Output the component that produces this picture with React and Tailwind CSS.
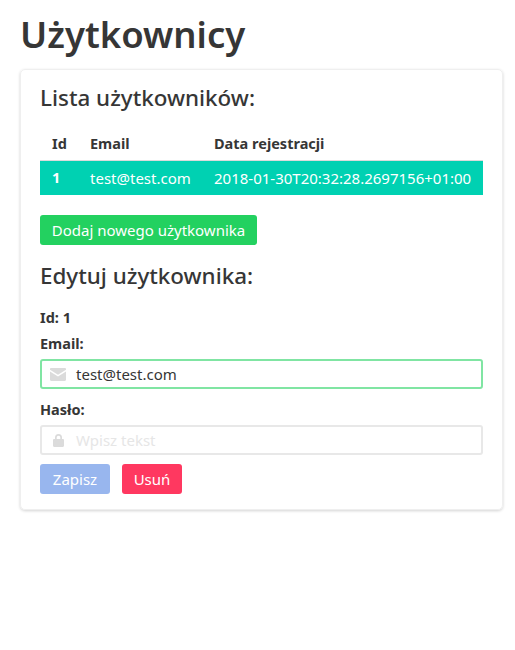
import React from 'react';

const MailIcon = () => (
  <svg className="w-4 h-[13px] text-[#dbdbdb]" viewBox="0 0 16 13" fill="currentColor">
    <path d="M0 1.2C0 .5.5 0 1.2 0h13.6C15.5 0 16 .5 16 1.2v.5L8 6.800 0 1.700v-.5z" />
    <path d="M0 3.400v8.400c0 .7.5 1.200 1.200 1.200h13.600c.7 0 1.200-.5 1.200-1.200V3.400L8 8.500 0 3.400z" />
  </svg>
);

const LockIcon = () => (
  <svg className="w-[11px] h-[13px] text-[#dbdbdb]" viewBox="0 0 11 13" fill="currentColor">
    <path d="M2 5V3.500a3.500 3.500 0 017 0V5h.8c.7 0 1.200.5 1.200 1.200v5.600c0 .7-.5 1.200-1.200 1.200H1.200C.5 13 0 12.500 0 11.800V6.200C0 5.500.5 5 1.200 5H2zm1.700 0h3.600V3.500a1.800 1.800 0 00-3.600 0V5z" />
  </svg>
);

const App = () => {
  return (
    <div className="min-h-[650px] bg-white px-5 pt-[11px] text-[#363636] font-['Noto_Sans','Open_Sans',sans-serif] text-[15px]">
      <h1 className="text-[36.5px] leading-[46px] font-semibold mb-[12px]">Użytkownicy</h1>

      <div className="w-[483px] rounded-[5px] border border-[#efefef] shadow-[0_1px_3px_rgba(10,10,10,0.18)] px-[19px] pt-[14px] pb-[15px]">
        <h2 className="text-[22.4px] leading-[28px] font-medium text-[#363636] mb-[17px]">Lista użytkowników:</h2>

        <table className="w-full border-collapse">
          <thead>
            <tr className="text-left">
              <th className="w-[38px] pl-3 h-[31px] font-bold text-[14.5px]">Id</th>
              <th className="w-[124px] h-[31px] pl-3 font-bold text-[14.5px]">Email</th>
              <th className="pl-3 h-[31px] font-bold text-[14.5px]">Data rejestracji</th>
            </tr>
          </thead>
          <tbody>
            <tr className="bg-[#00d1b2] text-white border-t border-[#dbdbdb]">
              <td className="pl-3 h-[35px] font-bold text-[14.5px]">1</td>
              <td className="pl-3 h-[35px] text-[15px]">test@test.com</td>
              <td className="pl-3 h-[35px] text-[15px] whitespace-nowrap">2018-01-30T20:32:28.2697156+01:00</td>
            </tr>
          </tbody>
        </table>

        <button className="block mt-5 h-[30px] w-[217px] rounded-[3px] bg-[#23d160] text-white text-[15px]">
          Dodaj nowego użytkownika
        </button>

        <h2 className="text-[22.4px] leading-[28px] font-medium mt-[17px] mb-[18px]">Edytuj użytkownika:</h2>

        <div className="font-bold text-[14.5px] leading-[19px] mb-[7px]">Id: 1</div>

        <label className="block font-bold text-[14.5px] leading-[19px] mb-[6px]">Email:</label>
        <div className="flex items-center h-[30px] rounded-[3px] border-2 border-[#80e5a3] mb-[11px]">
          <span className="w-[34px] pl-2 flex shrink-0"><MailIcon /></span>
          <span className="text-[15px]">test@test.com</span>
        </div>

        <label className="block font-bold text-[14.5px] leading-[19px] mb-[6px]">Hasło:</label>
        <div className="flex items-center h-[30px] rounded-[3px] border-2 border-[#e8e8e8] mb-[9px]">
          <span className="w-[34px] pl-[11px] flex shrink-0"><LockIcon /></span>
          <span className="text-[15px] text-[#e6e6e6]">Wpisz tekst</span>
        </div>

        <div className="flex gap-3">
          <button className="h-[30px] w-[70px] rounded-[3px] bg-[#98b6ee] text-white text-[15px]">Zapisz</button>
          <button className="h-[30px] w-[60px] rounded-[3px] bg-[#ff3860] text-white text-[15px]">Usuń</button>
        </div>
      </div>
    </div>
  );
};

export default App;
